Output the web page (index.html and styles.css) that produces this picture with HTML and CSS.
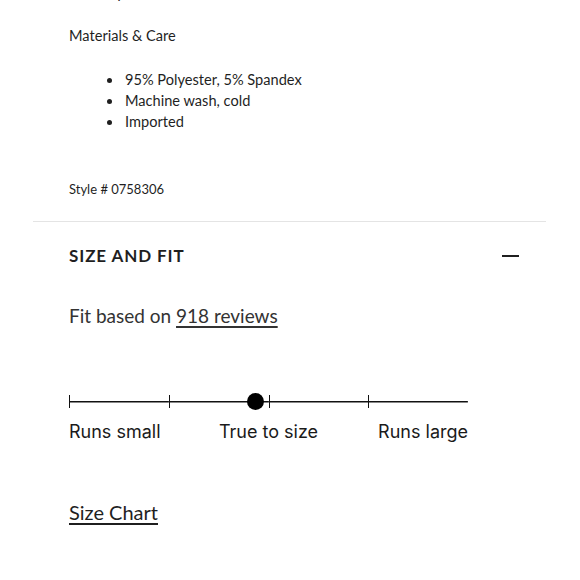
FILE: index.html
```html
<!DOCTYPE html>
<html lang="en">
<head>
<meta charset="utf-8">
<link rel="stylesheet" href="styles.css">
</head>
<body>
<div class="page">
  <div class="details">
    <p class="peek">Fully lined</p>
    <p class="subhead">Materials &amp; Care</p>
    <ul class="care">
      <li>95% Polyester, 5% Spandex</li>
      <li>Machine wash, cold</li>
      <li>Imported</li>
    </ul>
    <p class="style-no">Style # 0758306</p>
  </div>
  <div class="section">
    <div class="section-head">
      <h2 class="section-title">SIZE AND FIT</h2>
      <span class="minus"></span>
    </div>
    <p class="fit">Fit based on <a class="link" href="#">918 reviews</a></p>
    <div class="scale">
      <div class="track">
        <span class="seg"></span><span class="seg"></span><span class="seg"></span><span class="seg"></span>
        <span class="dot"></span>
      </div>
      <div class="labels">
        <span class="lab-left">Runs small</span>
        <span class="lab-mid">True to size</span>
        <span class="lab-right">Runs large</span>
      </div>
    </div>
    <a class="chart link" href="#">Size Chart</a>
  </div>
</div>
</body>
</html>
```
FILE: styles.css
```css
* { box-sizing: border-box; }
html, body { margin: 0; padding: 0; background: #fff; }
body {
  font-family: Lato, "Noto Sans", sans-serif;
  color: #1f1f1f;
}
.page { padding: 0 34px 0 33px; }
.details { padding-left: 36px; padding-top: 26px; position: relative; }
.peek {
  position: absolute; top: -18px; left: 60px; margin: 0;
  font-size: 15px; line-height: 20px; color: #1f1f1f;
}
.subhead { margin: 0; font-size: 14.6px; line-height: 20px; }
.care {
  margin: 22px 0 0; padding-left: 55px;
  font-size: 14.6px; line-height: 21px;
}
.care li { padding-left: 1px; height: 21px; }
.care li::marker { font-size: 16px; line-height: 21px; }
.style-no { margin: 49px 0 0; font-size: 13px; line-height: 18px; padding-bottom: 23px; }
.section {
  border-top: 1px solid #e4e4e4;
  padding-left: 36px;
}
.section-head {
  display: flex; align-items: center; justify-content: space-between;
  margin-top: 22px; padding-right: 27px; height: 24px;
}
.section-title {
  margin: 0; font-size: 17px; font-weight: 700; letter-spacing: 0.9px; line-height: 24px;
}
.minus { width: 17px; height: 2px; background: #1f1f1f; }
.fit {
  margin: 34px 0 0; font-size: 19px; line-height: 28px; color: #333;
}
.link { color: inherit; text-decoration: underline; text-underline-offset: 3px; text-decoration-thickness: 1.5px; }
.scale { width: 399px; margin-top: 65px; }
.track { position: relative; display: flex; height: 13px; margin-top: 3px; }
.seg {
  flex: 1;
  border-left: 1.5px solid #111;
  background: linear-gradient(#111, #111) center / 100% 1.5px no-repeat;
}
.seg:last-of-type { border-right: 1.5px solid #111; }
.dot {
  position: absolute; left: 178px; top: -2px;
  width: 17px; height: 17px; border-radius: 50%; background: #000;
}
.labels {
  display: grid; grid-template-columns: 1fr auto 1fr;
  margin-top: 11px;
  font-family: Inter, "Noto Sans", sans-serif;
  font-size: 18px; line-height: 26px; color: #1a1a1a;
}
.lab-right { text-align: right; }
.chart {
  display: inline-block; margin-top: 53px;
  font-size: 20px; line-height: 28px; color: #1f1f1f;
}
```
